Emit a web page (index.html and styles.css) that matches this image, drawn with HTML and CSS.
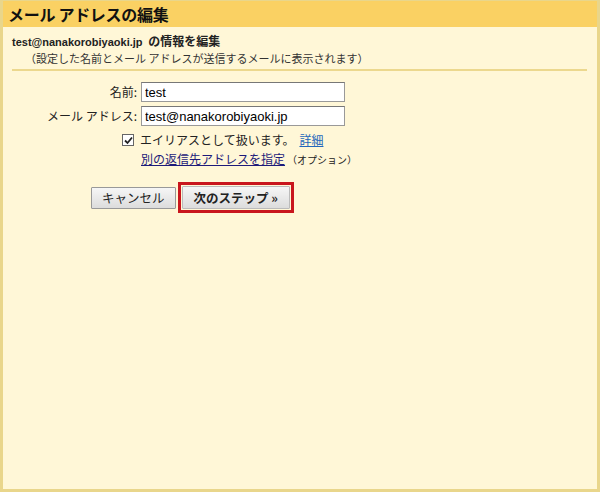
FILE: index.html
```html
<!DOCTYPE html>
<html lang="ja">
<head>
  <meta charset="UTF-8" />
  <title>メール アドレスの編集</title>
  <link rel="stylesheet" href="styles.css">
</head>
<body>
  <div class="frame">
    <div class="title-bar">
      <h1>メール アドレスの編集</h1>
    </div>

    <div class="content">
      <div class="intro">
        <div class="intro-head"><span class="addr">test@nanakorobiyaoki.jp</span> の情報を編集</div>
        <div class="intro-note">（設定した名前とメール アドレスが送信するメールに表示されます）</div>
      </div>

      <div class="form">
        <div class="row">
          <label class="label" for="name">名前:</label>
          <input type="text" id="name" class="field" value="test" />
        </div>
        <div class="row">
          <label class="label" for="email">メール アドレス:</label>
          <input type="text" id="email" class="field" value="test@nanakorobiyaoki.jp" />
        </div>
        <div class="row">
          <span class="label"></span>
          <div class="options">
            <label class="alias">
              <span class="check">
                <svg width="9" height="9" viewBox="0 0 9 9"><path d="M1 4.5 L3.5 7 L8 1.5" fill="none" stroke="#222" stroke-width="1.8"/></svg>
              </span>
              エイリアスとして扱います。<a href="#" class="more">詳細</a>
            </label>
            <div class="reply"><a href="#">別の返信先アドレスを指定</a><span class="opt">（オプション）</span></div>
          </div>
        </div>
      </div>

      <div class="actions">
        <button class="btn">キャンセル</button>
        <div class="next-wrap"><button class="btn next">次のステップ »</button></div>
      </div>
    </div>
  </div>
</body>
</html>
```

FILE: styles.css
```css
html, body {
  margin: 0;
  padding: 0;
  height: 100%;
  font-family: "Noto Sans CJK JP", sans-serif;
  color: #222;
}

.frame {
  box-sizing: border-box;
  height: 492px;
  border: 3px solid #e9d68b;
  border-top-width: 1px;
  background: #fff7d7;
  display: flex;
  flex-direction: column;
}

.title-bar {
  background: #fad163;
  height: 26px;
  padding: 0 5px;
  display: flex;
  align-items: center;
}

h1 {
  margin: 0;
  font-size: 16px;
  font-weight: bold;
  color: #111;
  letter-spacing: -0.3px;
}

.content {
  padding: 5px 10px 0 5px;
}

.intro {
  border-bottom: 2px solid #ecd88e;
  padding-bottom: 4px;
  margin-left: 4px;
}

.intro-head {
  font-size: 12px;
  font-weight: bold;
  line-height: 17px;
}

.addr {
  font-family: "Liberation Sans", sans-serif;
  font-size: 11px;
  margin-right: 3px;
}

.intro-note {
  font-size: 11px;
  line-height: 14px;
  padding-left: 13px;
  color: #333;
}

.form {
  margin-top: 11px;
  display: flex;
  flex-direction: column;
  gap: 4px;
}

.row {
  display: flex;
  align-items: flex-start;
}

.label {
  width: 129px;
  text-align: right;
  font-size: 12px;
  line-height: 20px;
  padding-right: 4px;
  flex-shrink: 0;
}

.field {
  box-sizing: border-box;
  width: 204px;
  height: 20px;
  margin: 0;
  border: 1px solid #999;
  border-top-color: #777;
  padding: 0 3px;
  font-family: "Liberation Sans", sans-serif;
  font-size: 13px;
  background: #fff;
  color: #000;
}

.options {
  margin-left: -19px;
  font-size: 12px;
}

.alias {
  display: flex;
  align-items: center;
  line-height: 20px;
}

.check {
  box-sizing: border-box;
  width: 12px;
  height: 12px;
  border: 1px solid #666;
  background: #fff;
  display: inline-flex;
  align-items: center;
  justify-content: center;
  margin-right: 6px;
}

.more {
  color: #2266bb;
  margin-left: 5px;
}

.reply {
  margin-left: 19px;
  line-height: 18px;
}

.reply a {
  color: #1d1a7a;
}

.opt {
  font-size: 10px;
  margin-left: 2px;
}

.actions {
  display: flex;
  align-items: center;
  gap: 2px;
  margin-top: 13px;
  padding-left: 83px;
}

.btn {
  box-sizing: border-box;
  height: 22px;
  padding: 0 10px;
  font-family: "Noto Sans CJK JP", sans-serif;
  font-size: 12.5px;
  color: #222;
  background: linear-gradient(#f6f6f6, #dcdcdc);
  border: 1px solid #999;
  border-radius: 1px;
  line-height: 20px;
}

.next-wrap {
  border: 3px solid #c9161d;
  padding: 1px;
  display: flex;
}

.next {
  height: 23px;
  font-weight: bold;
  padding: 0 11px;
  border: 1px solid #bbb;
}
```
